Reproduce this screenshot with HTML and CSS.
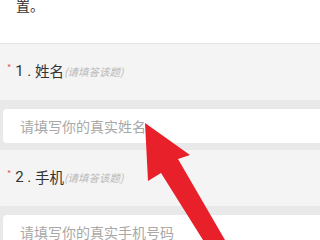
FILE: index.html
```html
<!DOCTYPE html>
<html lang="zh-CN">
<head>
<meta charset="utf-8">
<link rel="stylesheet" href="styles.css">
</head>
<body>
<div class="page">
  <div class="intro"><p class="intro-text">置。</p></div>
  <div class="question">
    <div class="q-title"><span class="req">*</span><span class="q-num">1 . </span><span class="q-name">姓名</span><span class="q-hint">(请填答该题)</span></div>
    <div class="q-answer"><input class="q-input" type="text" placeholder="请填写你的真实姓名"></div>
  </div>
  <div class="question">
    <div class="q-title"><span class="req">*</span><span class="q-num">2 . </span><span class="q-name">手机</span><span class="q-hint">(请填答该题)</span></div>
    <div class="q-answer"><input class="q-input" type="text" placeholder="请填写你的真实手机号码"></div>
  </div>
</div>
<svg class="arrow" width="320" height="240" viewBox="0 0 320 240">
  <polygon points="145,123 190,155 178,159 225,240 203,240 161,173 148,181" fill="#e8202a"/>
</svg>
</body>
</html>
```
FILE: styles.css
```css
html, body {
  margin: 0;
  padding: 0;
  width: 320px;
  height: 240px;
  overflow: hidden;
  background: #f4f4f4;
  font-family: "Noto Sans CJK SC", "Noto Sans", sans-serif;
}
.page {
  width: 320px;
}
.intro {
  height: 43px;
  background: #ffffff;
  border-bottom: 1px solid #e4e4e4;
  padding: 0 16px;
  box-sizing: content-box;
  overflow: hidden;
}
.intro-text {
  margin: -5px 0 0 0;
  font-size: 14px;
  line-height: 20px;
  color: #333333;
}
.q-title {
  height: 56px;
  background: #f4f4f4;
  display: flex;
  align-items: center;
  padding-left: 7px;
  padding-bottom: 2px;
  box-sizing: border-box;
  color: #333333;
  font-size: 14.5px;
  line-height: 20px;
}
.req {
  color: #f05050;
  font-size: 9px;
  align-self: center;
  margin-top: -6px;
  margin-right: 3px;
}
.q-num {
  font-family: "Roboto", "Noto Sans", sans-serif;
  font-size: 15px;
  white-space: pre;
  margin-left: 1px;
}
.q-hint {
  font-size: 10.5px;
  font-style: italic;
  color: #b8b8b8;
  margin-top: 2px;
}
.q-answer {
  background: #e9e9e9;
  padding: 9px 0 7px 3px;
}
.q-input {
  display: block;
  width: 100%;
  height: 34px;
  box-sizing: border-box;
  border: none;
  border-radius: 4px 0 0 4px;
  background: #ffffff;
  padding: 0 0 0 17px;
  margin: 0;
  font-family: "Noto Sans CJK SC", "Noto Sans", sans-serif;
  font-size: 14px;
  color: #333333;
  outline: none;
}
.q-input::placeholder {
  color: #a8a8a8;
}
.arrow {
  position: absolute;
  left: 0;
  top: 0;
  pointer-events: none;
}
```
